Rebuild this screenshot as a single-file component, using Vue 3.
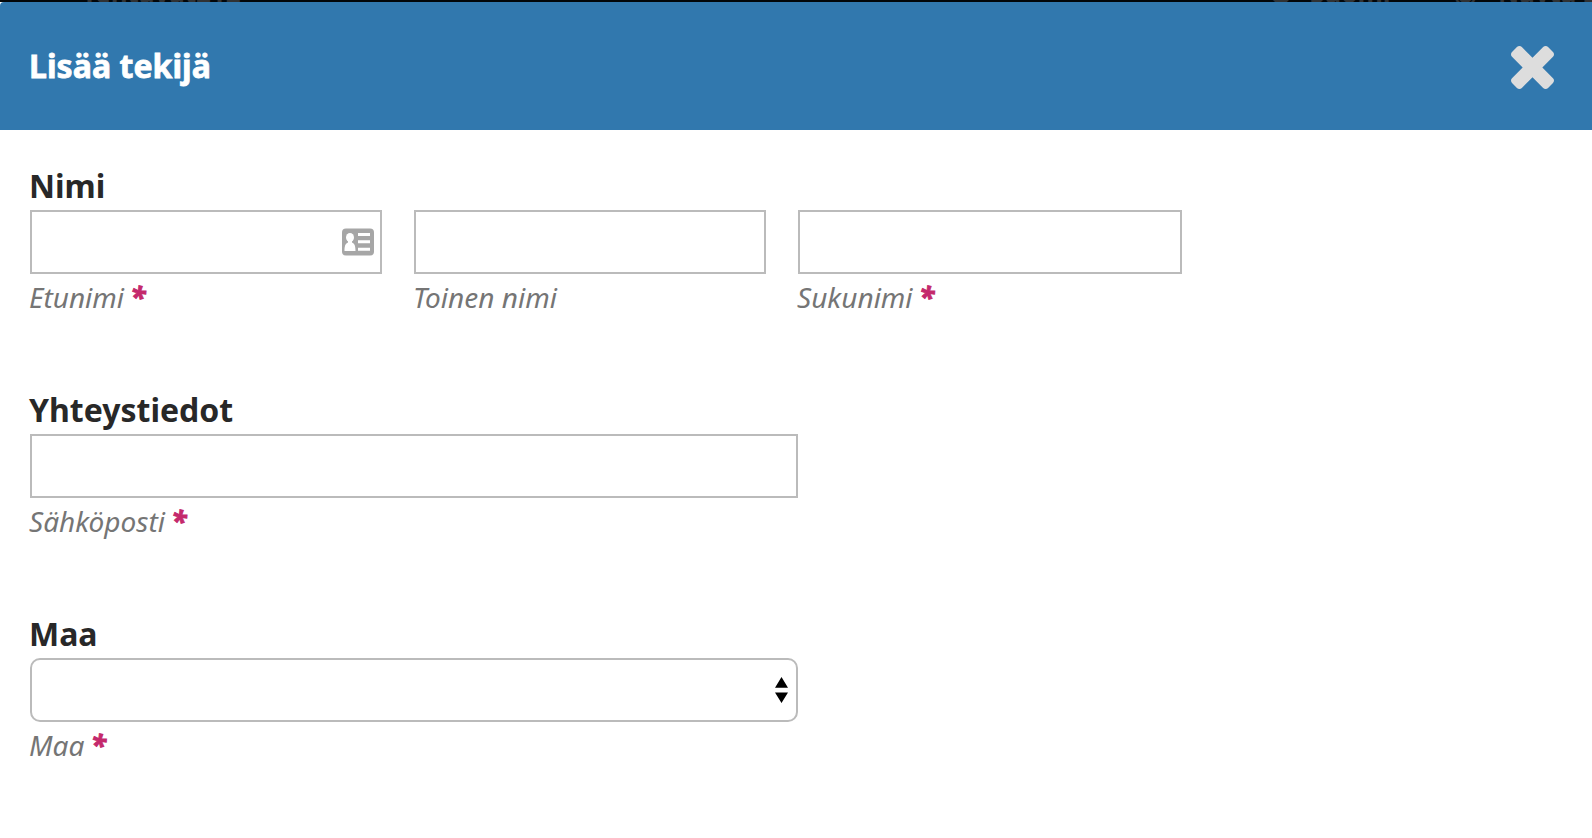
<script setup>
const names = [
  { label: 'Etunimi', required: true, card: true },
  { label: 'Toinen nimi' },
  { label: 'Sukunimi', required: true },
]
</script>

<template>
  <div class="page">
    <div class="backdrop">
      <span class="b1">Tehtävät</span><span class="count">212</span>
      <span class="b2">✪</span><span class="b2t">Suomi</span><span class="b3">◉</span><span class="b3t">Näytä sivusto</span>
    </div>
    <header class="header">
      <h1>Lisää tekijä</h1>
      <button class="close" aria-label="Sulje">
        <svg width="43" height="43" viewBox="302 366 1188 1188"><path d="M1490 1322q0 40-28 68l-136 136q-28 28-68 28t-68-28l-294-294-294 294q-28 28-68 28t-68-28l-136-136q-28-28-28-68t28-68l294-294-294-294q-28-28-28-68t28-68l136-136q28-28 68-28t68 28l294 294 294-294q28-28 68-28t68 28l136 136q28 28 28 68t-28 68l-294 294 294 294q28 28 28 68z" /></svg>
      </button>
    </header>
    <form class="form">
      <section>
        <h2>Nimi</h2>
        <div class="row">
          <label v-for="n in names" :key="n.label" class="field">
            <span class="box">
              <svg v-if="n.card" class="card" width="32" height="28" viewBox="0 0 32 28">
                <rect y=".5" width="32" height="27" rx="4" fill="#a6a6a6" />
                <ellipse cx="8" cy="9.500" rx="4" ry="4.600" fill="#fff" />
                <path d="M6 12h4v2.500c2.500 1 3.500 3 3.500 8.500h-11c0-5.500 1-7.500 3.500-8.500z" fill="#fff" />
                <path d="M16 6.500h12M16 13.700h12M16 21.300h12" stroke="#fff" stroke-width="3" />
              </svg>
            </span>
            <span class="sub">{{ n.label }} <b v-if="n.required">*</b></span>
          </label>
        </div>
      </section>
      <section>
        <h2>Yhteystiedot</h2>
        <label class="field wide">
          <span class="box"></span>
          <span class="sub">Sähköposti <b>*</b></span>
        </label>
      </section>
      <section>
        <h2>Maa</h2>
        <label class="field wide">
          <span class="box select">
            <svg width="14" height="26" viewBox="0 0 14 26"><path d="M7.500 0l6.500 10.800h-13zM7.500 26l6.500-10.500h-13z" /></svg>
          </span>
          <span class="sub">Maa <b>*</b></span>
        </label>
      </section>
    </form>
  </div>
</template>

<style>
body { margin: 0; background: #fff; }
</style>

<style scoped>
.page { width: 1592px; height: 838px; overflow: hidden; background: #fff; font-family: "Noto Sans", sans-serif; }
.backdrop { position: relative; height: 2px; overflow: hidden; background: #020609; color: #303234; font-size: 26px; font-weight: 700; line-height: 30px; }
.backdrop span { position: absolute; top: -22px; white-space: nowrap; }
.b1 { left: 82px; }
.backdrop .count { left: 196px; }
.b2 { left: 1270px; }
.b2t { left: 1310px; }
.b3 { left: 1454px; }
.b3t { left: 1498px; }
.header { box-sizing: border-box; height: 128px; padding: 0 38px 0 29px; background: #3178ae; border-radius: 4px 0 0 0; display: flex; align-items: center; justify-content: space-between; }
h1, h2 { margin: 0; font-size: 32px; font-weight: 700; line-height: 44px; }
h1 { color: #fff; letter-spacing: .05px; -webkit-text-stroke: .8px #fff; }
.close { display: flex; padding: 0; margin-top: 3px; border: 0; background: none; }
.close path { fill: #ddd; }
.form { padding: 34px 30px 0; }
section { height: 224px; }
h2 { color: #282828; height: 46px; text-indent: -1px; }
.row { display: flex; gap: 32px; }
.field { display: block; width: 352px; }
.row .field:last-child { width: 384px; }
.field.wide { width: 768px; }
.box { box-sizing: border-box; height: 64px; border: 2px solid #bbb; display: flex; align-items: center; justify-content: flex-end; padding-right: 6px; }
.box.select { border-radius: 10px; padding-right: 8px; }
.sub { display: block; margin-top: 3px; font-size: 28px; line-height: 40px; font-style: italic; color: #757575; text-indent: -1px; }
.sub b { color: #c4296c; margin-left: -1px; -webkit-text-stroke: .9px #c4296c; }
</style>
